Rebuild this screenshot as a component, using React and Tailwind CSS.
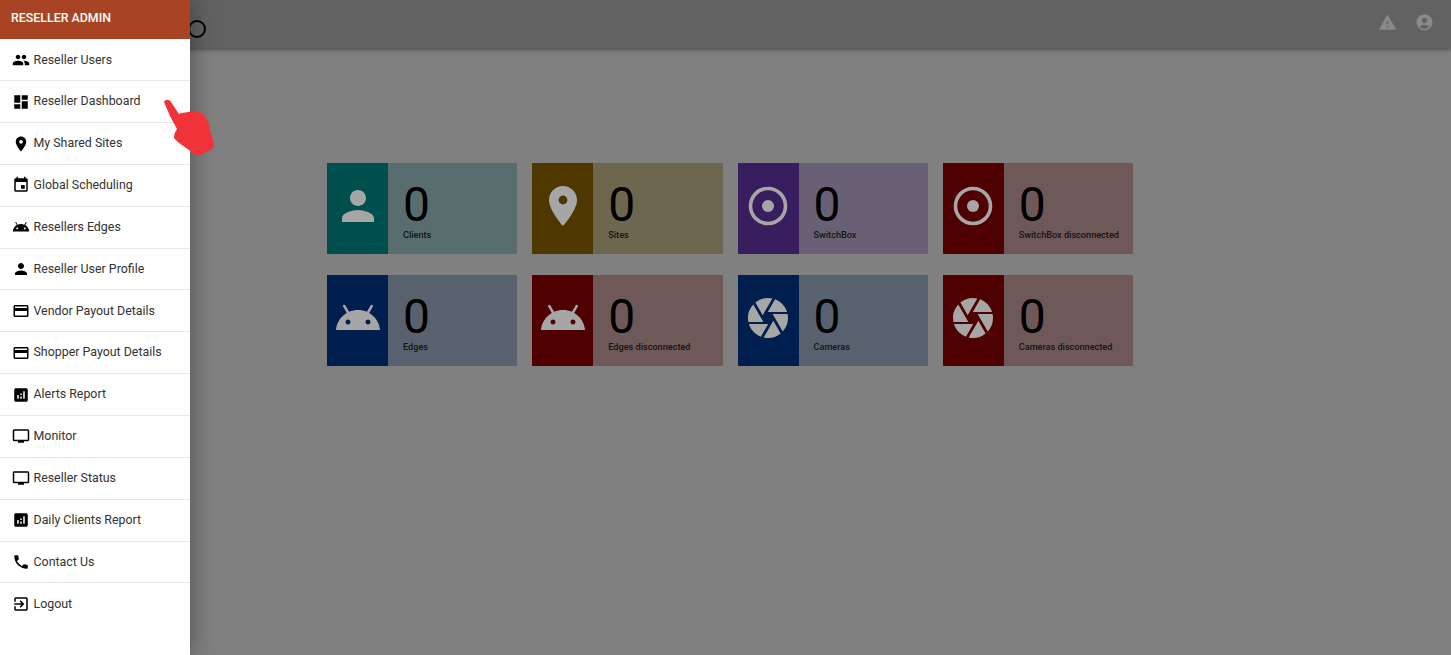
import {
  MdPeople, MdDashboard, MdLocationOn, MdEvent, MdPerson, MdCreditCard, MdAnalytics,
  MdPersonalVideo, MdPhone, MdExitToApp, MdCamera, MdWarning, MdAccountCircle,
} from 'react-icons/md'

function AndroidIcon({ size = 24, className = '' }) {
  return (
    <svg width={size} height={size} viewBox="0 0 24 24" fill="currentColor" className={className}>
      <path d="M17.6 9.48l1.84-3.18c.16-.31.04-.69-.26-.85-.29-.15-.65-.06-.83.22l-1.88 3.24c-2.86-1.21-6.08-1.21-8.94 0L5.65 5.67c-.19-.29-.58-.38-.87-.2-.28.18-.37.54-.22.83L6.4 9.48C3.3 11.25 1.28 14.44 1 18h22c-.28-3.56-2.3-6.75-5.4-8.52zM7 15.25c-.69 0-1.25-.56-1.25-1.25s.56-1.25 1.25-1.25 1.25.56 1.25 1.25-.56 1.25-1.25 1.25zm10 0c-.69 0-1.25-.56-1.25-1.25s.56-1.25 1.25-1.25 1.25.56 1.25 1.25-.56 1.25-1.25 1.25z" />
    </svg>
  )
}

function PinIcon({ size = 24 }) {
  return (
    <svg width={size} height={size} viewBox="0 0 24 24" fill="currentColor">
      <path
        fillRule="evenodd"
        d="M12 2C8.13 2 5 5.13 5 9c0 5.25 7 13 7 13s7-7.75 7-13c0-3.87-3.13-7-7-7zM12 6.8a2.2 2.2 0 1 0 0 4.4 2.2 2.2 0 0 0 0-4.4z"
      />
    </svg>
  )
}

function SwitchIcon({ size = 48 }) {
  return (
    <svg width={size} height={size} viewBox="0 0 48 48" fill="currentColor">
      <circle cx="24" cy="24" r="17.5" fill="none" stroke="currentColor" strokeWidth="3.6" />
      <circle cx="24" cy="24" r="6" />
    </svg>
  )
}

const menu = [
  ['Reseller Users', MdPeople],
  ['Reseller Dashboard', MdDashboard],
  ['My Shared Sites', MdLocationOn],
  ['Global Scheduling', MdEvent],
  ['Resellers Edges', AndroidIcon],
  ['Reseller User Profile', MdPerson],
  ['Vendor Payout Details', MdCreditCard],
  ['Shopper Payout Details', MdCreditCard],
  ['Alerts Report', MdAnalytics],
  ['Monitor', MdPersonalVideo],
  ['Reseller Status', MdPersonalVideo],
  ['Daily Clients Report', MdAnalytics],
  ['Contact Us', MdPhone],
  ['Logout', MdExitToApp],
]

const teal = { side: 'bg-[#007a7a]', body: 'bg-[#88aaaa]' }
const amber = { side: 'bg-[#7a5500]', body: 'bg-[#aa9e7a]' }
const purple = { side: 'bg-[#582e92]', body: 'bg-[#a194b6]' }
const red = { side: 'bg-[#7a0000]', body: 'bg-[#aa8888]' }
const blue = { side: 'bg-[#00307a]', body: 'bg-[#8896aa]' }

const cards = [
  ['Clients', MdPerson, teal],
  ['Sites', PinIcon, amber],
  ['SwitchBox', SwitchIcon, purple],
  ['SwitchBox disconnected', SwitchIcon, red],
  ['Edges', AndroidIcon, blue],
  ['Edges disconnected', AndroidIcon, red],
  ['Cameras', MdCamera, blue],
  ['Cameras disconnected', MdCamera, red],
]

function StatCard({ label, Icon, tone }) {
  return (
    <div className={`flex h-[91px] ${tone.body}`}>
      <div className={`flex w-[61px] shrink-0 items-center justify-center pb-[6px] text-white ${tone.side}`}>
        <Icon size={48} />
      </div>
      <div className="pl-[15px] text-black">
        <p className="mt-[19px] text-[48px] leading-[46px] font-[450]">0</p>
        <p className="mt-[1px] whitespace-nowrap text-[9.15px] leading-3 font-medium text-[#222]">{label}</p>
      </div>
    </div>
  )
}

export default function App() {
  return (
    <div className="relative h-[655px] w-[1451px] overflow-hidden bg-[#c5c5c5] font-['Roboto',sans-serif]">
      <header className="flex h-[48px] items-center justify-between bg-[#979797] pr-[17px] pl-[188px] shadow-[0_2px_4px_rgba(0,0,0,0.35)]">
        <div className="mt-[10px] h-[18px] w-[18px] rounded-full border-[2.5px] border-black" />
        <div className="-mt-1 flex items-center gap-[18px] text-[#d4d4d4]">
          <MdWarning size={19} />
          <MdAccountCircle size={19} />
        </div>
      </header>

      <main className="grid w-[1133px] grid-cols-4 gap-x-[15px] gap-y-[21px] pt-[115px] pl-[327px]">
        {cards.map(([label, Icon, tone]) => (
          <StatCard key={label} label={label} Icon={Icon} tone={tone} />
        ))}
      </main>

      {/* drawer backdrop */}
      <div className="absolute inset-0 bg-black/35" />

      <aside className="absolute top-0 left-0 h-full w-[190px] bg-white shadow-[0_0_25px_rgba(0,0,0,0.4)]">
        <div className="flex h-[39px] items-center bg-[#a84424] pb-[2px] pl-[11px] text-[12.4px] font-medium text-white">
          RESELLER ADMIN
        </div>
        <nav className="pt-[0.4px]">
          {menu.map(([label, Icon]) => (
            <div
              key={label}
              className="flex h-[41.85px] items-center border-b border-[#e8e8e8] pl-[11.5px] text-[12.4px] text-[#333] last:border-b-0"
            >
              <Icon size={18} className="shrink-0 text-black" />
              <span className="ml-[4px]">{label}</span>
            </div>
          ))}
        </nav>
      </aside>

      {/* pointer hand on top of the drawer edge */}
      <svg className="absolute top-[90px] left-[155px]" width="70" height="75" viewBox="0 0 70 75" fill="#ef3338">
        <path d="M9 12 C10 9 14 9 16 12 L24 24 C27 22 30 23 33 22 C38 20 44 21 48 24 C52 28 54 33 55 40 L59 54 C59 59 55 61 51 62 C47 65 42 66 38 64 L34 60 C29 56 23 53 19 48 C19 45 20 42 22 39 L15 26 Z" />
      </svg>
    </div>
  )
}
